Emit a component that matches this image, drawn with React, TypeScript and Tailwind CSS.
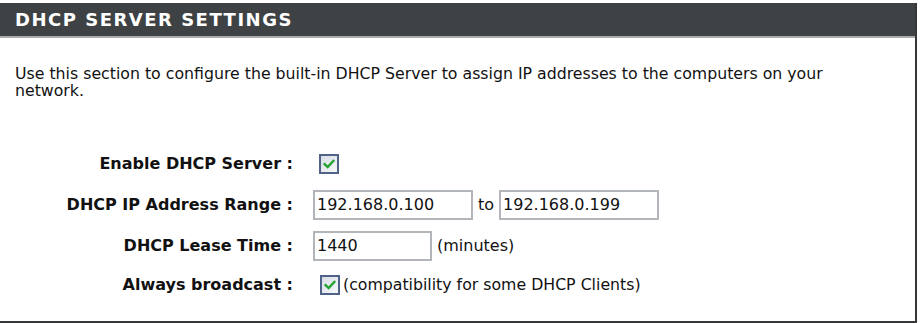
import React from 'react';

const font = { fontFamily: '"DejaVu Sans", Verdana, sans-serif' };

const Check = () => (
  <span className="flex h-[20px] w-[20px] shrink-0 items-center justify-center border-2 border-[#4f6388] bg-gradient-to-br from-[#d9dde6] to-[#f7f8fa]">
    <svg viewBox="0 0 16 16" className="h-[14px] w-[14px]">
      <path d="M3 8.2 L6.5 11.5 L13 4.5" fill="none" stroke="#26a333" strokeWidth="2.8" strokeLinecap="square" />
    </svg>
  </span>
);

const Field = ({ value, w }: { value: string; w: string }) => (
  <input
    type="text"
    defaultValue={value}
    className={`h-[30px] ${w} border-2 border-[#b2b6ba] bg-white px-[2px] text-[16px] text-[#111] outline-none`}
    style={font}
  />
);

const Label = ({ children }: { children: React.ReactNode }) => (
  <div className="w-[295px] shrink-0 pr-[2px] text-right text-[16px] font-bold text-[#111]">{children}</div>
);

export default function App() {
  return (
    <div className="min-h-screen bg-white" style={font}>
      <div className="mt-[3px] w-[917px] border-r-2 border-b-2 border-[#343638]">
        {/* Header */}
        <div className="flex h-[35px] items-center border-b-2 border-[#a9abac] bg-[#3e4244] pl-[15px]">
          <h2 className="text-[18px] font-bold tracking-[1.5px] text-white">DHCP SERVER SETTINGS</h2>
        </div>

        {/* Description */}
        <p className="w-[860px] pt-[27px] pl-[15px] text-[15.75px] leading-[17px] text-[#111]">
          Use this section to configure the built-in DHCP Server to assign IP addresses to the computers on your
          network.
        </p>

        {/* Form */}
        <div className="pt-[45px] pb-[17px] text-[#111]">
          <div className="flex h-[40px] items-center">
            <Label>Enable DHCP Server :</Label>
            <div className="ml-[24px]">
              <Check />
            </div>
          </div>
          <div className="flex h-[41px] items-center">
            <Label>DHCP IP Address Range :</Label>
            <div className="ml-[18px] flex items-center">
              <Field value="192.168.0.100" w="w-[160px]" />
              <span className="mx-[5px] text-[16px]">to</span>
              <Field value="192.168.0.199" w="w-[160px]" />
            </div>
          </div>
          <div className="flex h-[41px] items-center">
            <Label>DHCP Lease Time :</Label>
            <div className="ml-[18px] flex items-center">
              <Field value="1440" w="w-[119px]" />
              <span className="ml-[5px] text-[16px]">(minutes)</span>
            </div>
          </div>
          <div className="flex h-[38px] items-center">
            <Label>Always broadcast :</Label>
            <div className="ml-[25px] flex items-center">
              <Check />
              <span className="ml-[3px] text-[15.75px]">(compatibility for some DHCP Clients)</span>
            </div>
          </div>
        </div>
      </div>
    </div>
  );
}
